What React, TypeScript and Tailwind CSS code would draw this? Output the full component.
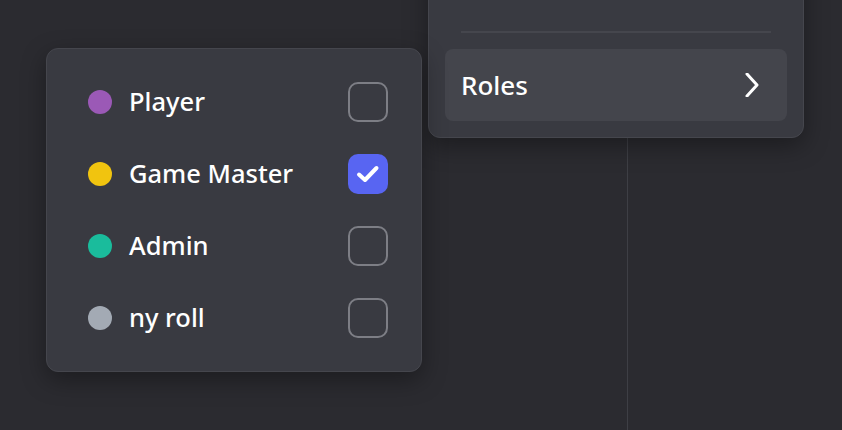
import React from 'react';

const roles = [
  { name: 'Player', color: 'bg-[#9b59b6]', checked: false },
  { name: 'Game Master', color: 'bg-[#f1c40f]', checked: true },
  { name: 'Admin', color: 'bg-[#1abc9c]', checked: false },
  { name: 'ny roll', color: 'bg-[#a3aab4]', checked: false },
];

const Checkbox = ({ checked }: { checked: boolean }) =>
  checked ? (
    <div className="flex h-10 w-10 items-center justify-center rounded-[10px] bg-[#5865f2]">
      <svg width="26" height="26" viewBox="0 0 26 26" fill="none">
        <path d="M4 13.5l6 5.5L21.5 7" stroke="white" strokeWidth="4" strokeLinecap="round" strokeLinejoin="round" />
      </svg>
    </div>
  ) : (
    <div className="h-10 w-10 rounded-[10px] border-2 border-[#7d7e85] bg-[#393a41]" />
  );

const App = () => {
  return (
    <div
      className="relative h-[430px] w-[842px] overflow-hidden bg-[#2b2b30] text-white"
      style={{ fontFamily: '"Noto Sans", "Open Sans", sans-serif' }}
    >
      {/* divider behind the popouts */}
      <div className="absolute left-[627px] top-0 h-full w-px bg-[#3e3f45]" />

      {/* member context menu (top cut off) */}
      <div className="absolute left-[428px] top-[-40px] w-[376px] rounded-[12px] border border-[#45464d] bg-[#393a41] p-4 shadow-[0_8px_24px_rgba(0,0,0,0.35)]">
        <div className="h-[54px]" />
        <div className="mx-4 h-[2px] bg-[#45464d]" />
        <div className="mt-4 flex h-[72px] items-center justify-between rounded-[8px] bg-[#44454c] px-4">
          <span className="text-[26px] font-medium leading-none">Roles</span>
          <svg width="24" height="24" viewBox="0 0 24 24" fill="none" className="mr-[6px]">
            <path d="M6 1l10 11L6 23" stroke="white" strokeWidth="3" strokeLinecap="round" strokeLinejoin="round" />
          </svg>
        </div>
      </div>

      {/* roles submenu */}
      <div className="absolute left-[46px] top-[48px] w-[376px] rounded-[12px] border border-[#45464d] bg-[#393a41] px-4 py-[17px] shadow-[0_8px_24px_rgba(0,0,0,0.35)]">
        {roles.map((role) => (
          <div key={role.name} className="flex h-[72px] items-center pl-[25px] pr-[17px]">
            <span className={`h-6 w-6 rounded-full ${role.color}`} />
            <span className="ml-[17px] flex-1 text-[25.5px] font-medium leading-none">{role.name}</span>
            <Checkbox checked={role.checked} />
          </div>
        ))}
      </div>
    </div>
  );
};

export default App;
